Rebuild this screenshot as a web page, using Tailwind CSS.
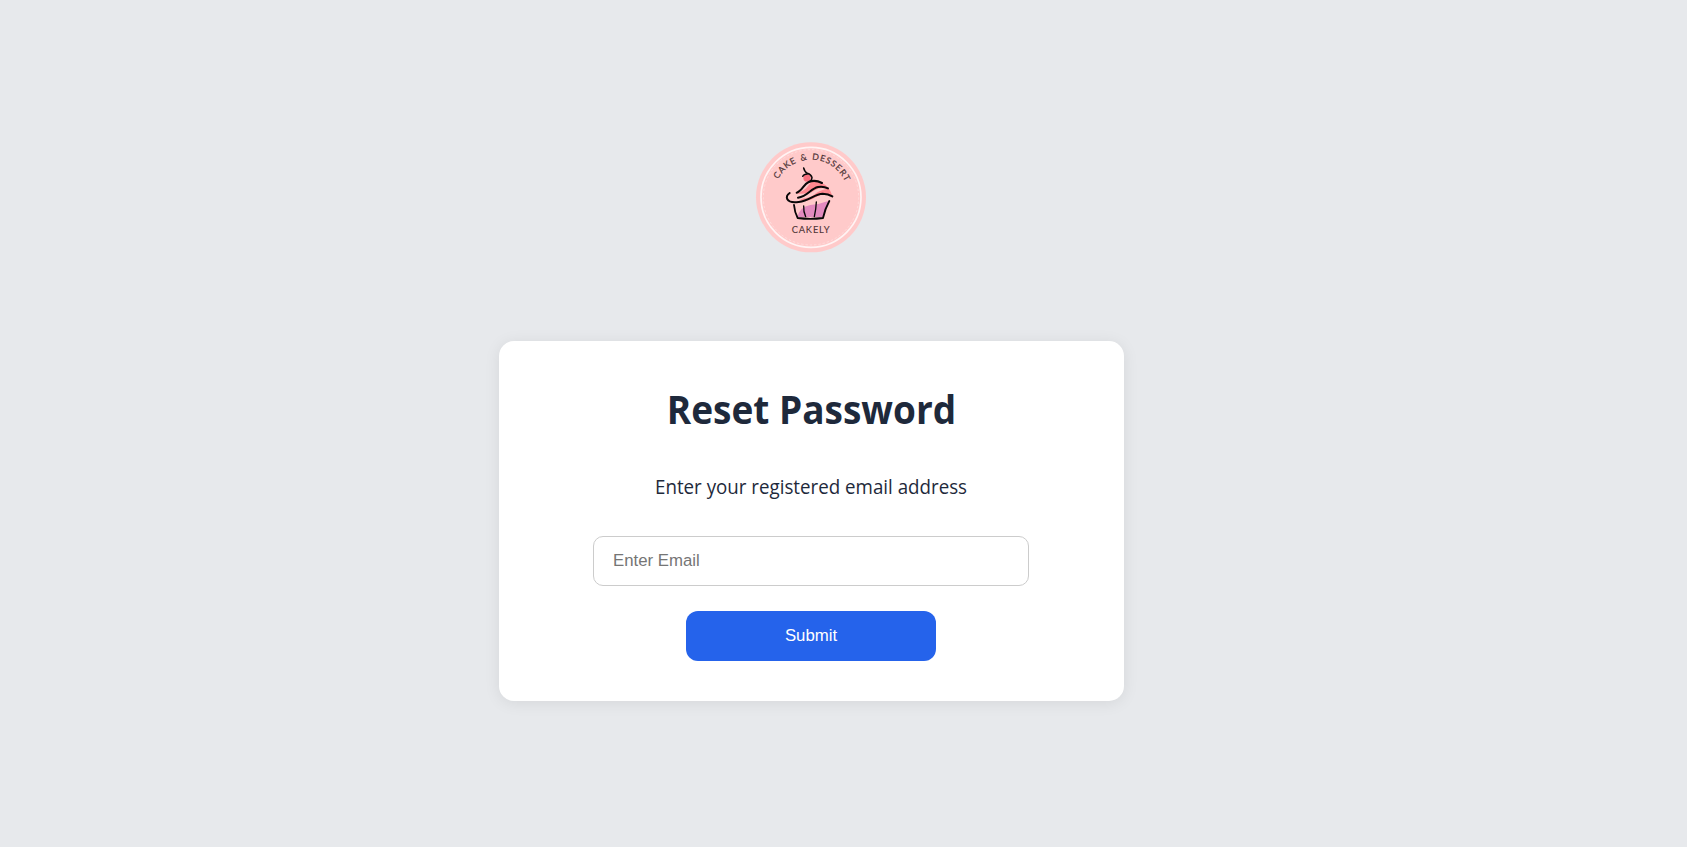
<!DOCTYPE html>
<html lang="en">
<head>
<meta charset="utf-8">
<title>Reset Password</title>
<script src="https://cdn.jsdelivr.net/npm/@tailwindcss/browser@4"></script>
</head>
<body class="h-screen overflow-hidden bg-[#e7e9ec] text-[#1e293b]">
<main class="flex flex-col items-center pt-[136px] pr-16">
  <svg class="mr-px h-[122px] w-[122px]" viewBox="0 0 366 366" role="img" aria-label="Cakely">
    <circle cx="183" cy="184" r="165" fill="#ffcaca"/>
    <circle cx="183" cy="184" r="150" fill="none" stroke="#fff3f3" stroke-width="5"/>
    <circle cx="183" cy="184" r="143" fill="none" stroke="#ffdede" stroke-width="2.500" stroke-dasharray="7 6"/>
    <path id="arc" d="M71 183a112 112 0 0 1 224 0" fill="none"/>
    <text font-family="Lato, sans-serif" font-size="26" word-spacing="3" fill="#4d3335" stroke="#4d3335" stroke-width=".6"><textPath href="#arc" startOffset="55" textLength="249">CAKE &amp; DESSERT</textPath></text>
    <text x="125" y="292" textLength="114" font-family="Lato, sans-serif" font-size="28" fill="#4d3335" stroke="#4d3335" stroke-width=".3">CAKELY</text>
    <circle cx="171" cy="126" r="11" fill="#f9707e"/>
    <path d="M139 172C156 159 164 143 184 137Q202 132 216 141Q238 151 247 179Q222 169 198 183Q172 199 149 193Q174 180 188 166Q164 177 139 172Z" fill="#ff8890"/>
    <path d="M142 171C158 164 163 144 184 139C171 151 169 164 142 171ZM144 186Q173 180 194 163Q211 153 235 158Q209 161 192 176Q171 191 144 186Z" fill="#ffcaca"/>
    <path d="M143 243Q148 213 181 207Q211 204 237 194L220 244Z" fill="#e28abf"/>
    <g fill="none" stroke="#090708" stroke-linecap="round" stroke-linejoin="round">
      <path d="M161 96Q164 108 172 112Q184 116 186 125Q186 132 179 137" stroke-width="4.500"/>
      <path d="M158 121Q162 114 172 114" stroke-width="4"/>
      <path d="M140 170C156 166 160 145 176 138Q195 130 216 141" stroke-width="6"/>
      <path d="M144 185C174 181 181 158 204 153Q220 150 234 157" stroke-width="6"/>
      <path d="M119 171Q107 179 112 190Q119 202 146 198C180 194 192 174 218 173Q235 173 247 181" stroke-width="6"/>
      <path d="M132 207Q134 229 143 246Q181 251 219 246Q225 218 238 195" stroke-width="5.500"/>
      <path d="M161 210Q160 227 167 242M199 198Q198 220 193 242" stroke-width="4"/>
    </g>
  </svg>
  <section class="mt-[83px] flex h-[360px] w-[625px] flex-col items-center rounded-[15px] bg-white pt-10 pr-px shadow-[0_2px_16px_rgba(0,0,0,0.08)]">
    <h1 class="h-[60px] scale-x-[.925] whitespace-nowrap font-['Open_Sans',sans-serif] text-[40px] leading-[55px] font-bold">Reset Password</h1>
    <p class="mt-[31px] h-[30px] translate-x-[0.5px] scale-x-[.937] whitespace-nowrap font-['Open_Sans',sans-serif] text-[20px] leading-[30px]">Enter your registered email address</p>
    <input type="email" placeholder="Enter Email" class="mt-[34px] h-[50px] w-[436px] rounded-[10px] border border-[#ccc] bg-white px-[19px] font-['Liberation_Sans',Arial,sans-serif] text-[16.8px] placeholder:text-[#757575]">
    <button class="mt-[25px] h-[50px] w-[250px] rounded-xl bg-[#2563eb] font-['Liberation_Sans',Arial,sans-serif] text-[16.8px] text-white">Submit</button>
  </section>
</main>
</body>
</html>
